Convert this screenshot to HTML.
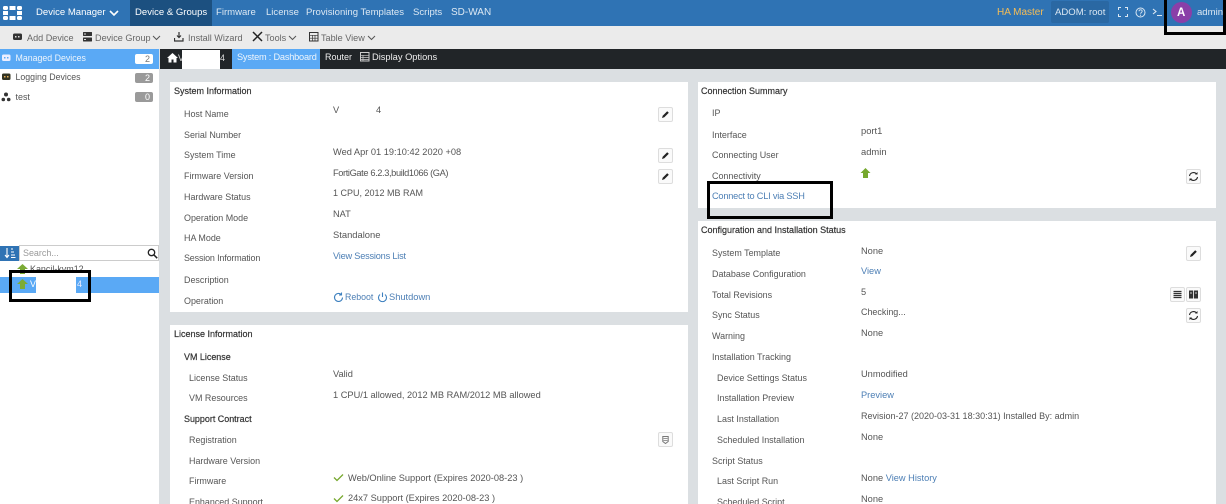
<!DOCTYPE html>
<html><head><meta charset="utf-8"><style>
html,body{margin:0;padding:0;width:1226px;height:504px;overflow:hidden;background:#fff}
#r{position:relative;width:1226px;height:504px;overflow:hidden;font:8.95px/12px "Liberation Sans",sans-serif;color:#555;filter:blur(.35px)}
.b{position:absolute}
.t{position:absolute;white-space:nowrap;margin-top:-.6px}
.a{margin-top:.4px}
.v{font-size:9.25px}
.n{color:#dce8f3;font-size:9.55px;font-weight:400}
.h{color:#333;font-size:9px;font-weight:400;-webkit-text-stroke:.2px #333}
.s{color:#333;-webkit-text-stroke:.2px #333}
.l{color:#4d7fb5}
.tb{color:#666;font-size:9.1px}
.ic{position:absolute;width:13px;height:13px;background:#fafafa;border:1px solid #ddd;border-radius:2px}
.ic svg,.x{position:absolute;left:0;top:0}
.bd{position:absolute;height:10px;width:18px;border-radius:2px;background:#9a9a9a;color:#fff;font-size:9px;line-height:10px;text-align:right;box-sizing:border-box;padding-right:3px}
.f{position:absolute;border:3px solid #000;box-sizing:border-box}
</style></head><body><div id="r">
<!-- top bar -->
<div class="b" style="left:0;top:0;width:1226px;height:26px;background:#2f73b4"></div>
<div class="b" style="left:130px;top:0;width:82px;height:26px;background:#1c5080"></div>
<svg class="x" style="left:3px;top:5px" width="20" height="16" viewBox="0 0 20 16"><g fill="#fff"><rect x="0" y="1" width="5" height="4" rx="1.500"/><rect x="6.500" y="1" width="6" height="4"/><rect x="14" y="1" width="5" height="4" rx="1.500"/><rect x="0" y="6" width="5" height="4"/><rect x="14" y="6" width="5" height="4"/><rect x="0" y="11" width="5" height="4" rx="1.500"/><rect x="6.500" y="11" width="6" height="4"/><rect x="14" y="11" width="5" height="4" rx="1.500"/></g></svg>
<div class="t n" style="left:36px;top:7.500px;color:#fff">Device Manager</div>
<svg class="x" style="left:109px;top:10px" width="10" height="7"><path d="M1 1l4 4 4-4" fill="none" stroke="#fff" stroke-width="1.600"/></svg>
<div class="t n" style="left:135px;top:7.500px;color:#fff">Device &amp; Groups</div>
<div class="t n" style="left:216px;top:7.500px">Firmware</div>
<div class="t n" style="left:266px;top:7.500px">License</div>
<div class="t n" style="left:306px;top:7.500px">Provisioning Templates</div>
<div class="t n" style="left:413px;top:7.500px">Scripts</div>
<div class="t n" style="left:451px;top:7.500px;font-size:10px">SD-WAN</div>
<div class="t" style="left:997px;top:7.500px;color:#f5bd57;font-size:10px">HA Master</div>
<div class="b" style="left:1051px;top:1px;width:58px;height:22px;background:#2a68a3;border-radius:2px"></div>
<div class="t n" style="left:1055px;top:7.500px">ADOM: root</div>
<svg class="x" style="left:1118px;top:7px" width="10" height="10"><path d="M0.500 3V.5H3M7 .5H9.500V3M9.500 7V9.500H7M3 9.500H.5V7" fill="none" stroke="#dce8f3"/></svg>
<svg class="x" style="left:1135px;top:7px" width="11" height="11"><circle cx="5.500" cy="5.500" r="4.500" fill="none" stroke="#dce8f3"/><path d="M4 4.300c0-2 3.200-2 3.200 0 0 1.200-1.600 1.200-1.600 2.400" fill="none" stroke="#dce8f3" stroke-width=".9"/><circle cx="5.500" cy="8.200" r=".6" fill="#dce8f3"/></svg>
<svg class="x" style="left:1152px;top:8px" width="11" height="9"><path d="M1 1l3 2.500-3 2.500M5 7.500h5" fill="none" stroke="#dce8f3" stroke-width="1.100"/></svg>
<div class="b" style="left:1171px;top:2px;width:21px;height:21px;border-radius:50%;background:#8a3fa8"></div>
<div class="t" style="left:1177px;top:8px;color:#fff;font-size:11.500px;font-weight:700">A</div>
<div class="t n" style="left:1197px;top:7.500px">admin</div>
<!-- toolbar -->
<div class="b" style="left:0;top:26px;width:1226px;height:23px;background:#ebebeb"></div>
<svg class="x" style="left:13px;top:33px" width="10" height="8"><rect x="0" y="0.500" width="9" height="6.500" rx="1.500" fill="#333"/><rect x="2" y="3" width="1.500" height="1.500" fill="#ddd"/><rect x="5" y="3" width="1.500" height="1.500" fill="#ddd"/></svg>
<div class="t tb" style="left:27px;top:32.500px">Add Device</div>
<svg class="x" style="left:83px;top:32px" width="10" height="10"><g fill="#333"><rect x="0" y="0" width="9" height="4" rx=".5"/><rect x="0" y="5.500" width="9" height="4" rx=".5"/></g><rect x="1" y="1.500" width="2" height="1" fill="#ddd"/><rect x="1" y="7" width="2" height="1" fill="#ddd"/></svg>
<div class="t tb" style="left:95px;top:32.500px">Device Group</div>
<svg class="x" style="left:152px;top:35px" width="9" height="6"><path d="M1 1l3.500 3.500L8 1" fill="none" stroke="#555"/></svg>
<svg class="x" style="left:174px;top:32px" width="10" height="10"><path d="M5 0v5M3 3.500l2 2 2-2M.5 6v3h8.500V6" fill="none" stroke="#333" stroke-width="1.200"/></svg>
<div class="t tb" style="left:188px;top:32.500px">Install Wizard</div>
<svg class="x" style="left:252px;top:31px" width="11" height="11"><path d="M1 1l9 9M10 1L1 10" fill="none" stroke="#222" stroke-width="1.500"/></svg>
<div class="t tb" style="left:265px;top:32.500px">Tools</div>
<svg class="x" style="left:288px;top:35px" width="9" height="6"><path d="M1 1l3.500 3.500L8 1" fill="none" stroke="#555"/></svg>
<svg class="x" style="left:309px;top:32px" width="10" height="10"><rect x=".5" y=".5" width="8.500" height="8.500" fill="none" stroke="#333"/><path d="M1 3.300h8M1 6.200h8M3.500 3v6M6 3v6" stroke="#333" stroke-width=".7"/></svg>
<div class="t tb" style="left:321px;top:32.500px">Table View</div>
<svg class="x" style="left:367px;top:35px" width="9" height="6"><path d="M1 1l3.500 3.500L8 1" fill="none" stroke="#555"/></svg>
<!-- sidebar -->
<div class="b" style="left:159px;top:49px;width:1067px;height:455px;background:#dbdfe2"></div>
<div class="b" style="left:0;top:49px;width:159px;height:20px;background:#5aa9f5"></div>
<svg class="x" style="left:2px;top:54px" width="10" height="9"><rect x="0" y=".5" width="8.500" height="6.500" rx="1.500" fill="#eef"/><rect x="2" y="3" width="1.500" height="1.500" fill="#5aa9f5"/><rect x="5" y="3" width="1.500" height="1.500" fill="#5aa9f5"/></svg>
<div class="t" style="left:15.500px;top:53px;color:#eef5fc;font-size:8.800px">Managed Devices</div>
<div class="bd" style="left:135px;top:54px;background:#fff;color:#777">2</div>
<svg class="x" style="left:2px;top:73px" width="10" height="9"><rect x="0" y=".5" width="8.500" height="6.500" rx="1.500" fill="#332"/><rect x="2" y="3" width="1.500" height="1.500" fill="#e8b25a"/><rect x="5" y="3" width="1.500" height="1.500" fill="#e8b25a"/></svg>
<div class="t" style="left:15.500px;top:72px;font-size:8.800px">Logging Devices</div>
<div class="bd" style="left:135px;top:73px">2</div>
<svg class="x" style="left:1px;top:92px" width="11" height="10"><circle cx="5" cy="2.500" r="2" fill="#333"/><circle cx="2.300" cy="7.500" r="1.800" fill="#333"/><circle cx="7.700" cy="7.500" r="1.800" fill="#333"/></svg>
<div class="t" style="left:15.500px;top:91.500px">test</div>
<div class="bd" style="left:135px;top:92px">0</div>
<!-- search -->
<div class="b" style="left:0;top:246px;width:19px;height:15px;background:#2f73b4"></div>
<svg class="x" style="left:4px;top:248px" width="12" height="11"><path d="M3 0v9M1 7l2 2.500L5 7M7 1h2M7 4h3M7 7h4M7 9.500h4.500" fill="none" stroke="#fff" stroke-width="1.100"/></svg>
<div class="b" style="left:19px;top:245px;width:140px;height:16px;border:1px solid #ccc;box-sizing:border-box;background:#fff"></div>
<div class="t a" style="left:23px;top:247px;color:#999">Search...</div>
<svg class="x" style="left:147px;top:248px" width="11" height="11"><circle cx="4.500" cy="4.500" r="3.200" fill="none" stroke="#222" stroke-width="1.300"/><path d="M7 7l3.200 3.200" stroke="#222" stroke-width="1.500"/></svg>
<svg class="x" style="left:17px;top:264px" width="12" height="10"><path d="M5.500 0L11 5H8v5H3V5H0z" fill="#7cab35"/></svg>
<div class="t" style="left:30px;top:263.500px">Kancil-kvm12</div>
<div class="b" style="left:0;top:277px;width:159px;height:16px;background:#5aa9f5"></div>
<svg class="x" style="left:17px;top:279px" width="11" height="10"><path d="M5.500 0L11 5H8v5H3V5H0z" fill="#7cab35"/></svg>
<div class="t" style="left:30px;top:279px;color:#fff">V</div>
<div class="b" style="left:36px;top:277px;width:40px;height:16px;background:#fff"></div>
<div class="t" style="left:77px;top:279px;color:#eef">4</div>
<div class="f" style="left:9px;top:270px;width:82px;height:32px"></div>
<!-- breadcrumb -->
<div class="b" style="left:160px;top:49px;width:1066px;height:20px;background:#212528"></div>
<div class="b" style="left:232px;top:49px;width:88px;height:20px;background:#5aa9f5"></div>
<svg class="x" style="left:167px;top:53px" width="11" height="10"><path d="M5.500 0L11 5H9.500v4.500H6.500V6.500h-2v3H1.500V5H0z" fill="#fff"/></svg>
<div class="t" style="left:178px;top:52.500px;color:#ddd">V</div>
<div class="b" style="left:182px;top:50px;width:38px;height:19px;background:#fff"></div>
<div class="t" style="left:220px;top:52.500px;color:#ddd">4</div>
<div class="t" style="left:237px;top:51.500px;color:#eef5fc;font-size:9.200px;letter-spacing:-.2px">System : Dashboard</div>
<div class="t" style="left:325px;top:51.500px;color:#eee;font-size:9px">Router</div>
<svg class="x" style="left:360px;top:52px" width="10" height="10"><rect x=".5" y=".5" width="8.500" height="8.500" fill="none" stroke="#ccc"/><path d="M1 3.300h8M1 5.500h8M1 7.500h8M3 3v6" stroke="#ccc" stroke-width=".7"/></svg>
<div class="t" style="left:372px;top:51.500px;color:#eee;font-size:9.300px">Display Options</div>
<!-- panels -->
<div class="b" style="left:170px;top:82px;width:518px;height:230px;background:#fff"></div>
<div class="b" style="left:170px;top:325px;width:518px;height:179px;background:#fff"></div>
<div class="b" style="left:698px;top:82px;width:518px;height:126px;background:#fff"></div>
<div class="b" style="left:698px;top:221px;width:518px;height:283px;background:#fff"></div>
<!-- System Information -->
<div class="t h a" style="left:174px;top:85px">System Information</div>
<div class="t a" style="left:184px;top:108px">Host Name</div><div class="t v" style="left:333px;top:105px">V</div><div class="t v" style="left:376px;top:105px">4</div>
<div class="t a" style="left:184px;top:128.500px">Serial Number</div>
<div class="t" style="left:184px;top:149.500px">System Time</div><div class="t v" style="left:333px;top:147px">Wed Apr 01 19:10:42 2020 +08</div>
<div class="t a" style="left:184px;top:170px">Firmware Version</div><div class="t v" style="left:333px;top:168px;letter-spacing:-.38px">FortiGate 6.2.3,build1066 (GA)</div>
<div class="t a" style="left:184px;top:191px">Hardware Status</div><div class="t v" style="left:333px;top:188px;font-size:9px">1 CPU, 2012 MB RAM</div>
<div class="t a" style="left:184px;top:211.500px">Operation Mode</div><div class="t v" style="left:333px;top:209px">NAT</div>
<div class="t a" style="left:184px;top:232px">HA Mode</div><div class="t v" style="left:333px;top:230px;font-size:9.400px">Standalone</div>
<div class="t" style="left:184px;top:253px;letter-spacing:-.15px">Session Information</div><div class="t l" style="left:333px;top:250.500px;font-size:9.200px;letter-spacing:-.2px">View Sessions List</div>
<div class="t a" style="left:184px;top:274px">Description</div>
<div class="t a" style="left:184px;top:294.500px">Operation</div>
<svg class="x" style="left:333px;top:292px" width="11" height="11"><path d="M9.500 5.500a4 4 0 1 1-1.300-3M8.500 .5v2.500H6" fill="none" stroke="#3d80bf" stroke-width="1.100"/></svg>
<div class="t l" style="left:345px;top:291.500px;font-size:8.800px">Reboot</div>
<svg class="x" style="left:377px;top:292px" width="11" height="11"><path d="M3 2.500a4 4 0 1 0 5 0M5.500 .5V5" fill="none" stroke="#3d80bf" stroke-width="1.100"/></svg>
<div class="t l" style="left:389px;top:291.500px;font-size:9.300px">Shutdown</div>
<!-- pencil icons -->
<div class="ic" style="left:658px;top:107px"><svg width="13" height="13"><path d="M3 10l.7-2.300 4.500-4.500 1.600 1.600-4.500 4.500z" fill="#222"/></svg></div>
<div class="ic" style="left:658px;top:148px"><svg width="13" height="13"><path d="M3 10l.7-2.300 4.500-4.500 1.600 1.600-4.500 4.500z" fill="#222"/></svg></div>
<div class="ic" style="left:658px;top:169px"><svg width="13" height="13"><path d="M3 10l.7-2.300 4.500-4.500 1.600 1.600-4.500 4.500z" fill="#222"/></svg></div>
<!-- License -->
<div class="t h a" style="left:174px;top:328px">License Information</div>
<div class="t s a" style="left:184px;top:350.500px">VM License</div>
<div class="t a" style="left:189px;top:371.500px">License Status</div><div class="t v" style="left:333px;top:369px">Valid</div>
<div class="t a" style="left:189px;top:392px">VM Resources</div><div class="t v" style="left:333px;top:389.500px">1 CPU/1 allowed, 2012 MB RAM/2012 MB allowed</div>
<div class="t s a" style="left:184px;top:413px">Support Contract</div>
<div class="t a" style="left:189px;top:433.500px">Registration</div>
<div class="ic" style="left:658px;top:432px"><svg width="13" height="13"><path d="M3.800 3.500h5.400v5l-2.700 2-2.700-2z" fill="none" stroke="#777"/><path d="M4.500 5.500h4M4.500 7.500h4" stroke="#777" stroke-width=".7"/></svg></div>
<div class="t a" style="left:189px;top:454.500px">Hardware Version</div>
<div class="t a" style="left:189px;top:475px">Firmware</div>
<svg class="x" style="left:333px;top:473px" width="11" height="9"><path d="M1 4.500l3 3 6-6" fill="none" stroke="#76a82e" stroke-width="1.300"/></svg>
<div class="t v" style="left:348px;top:472.500px">Web/Online Support (Expires 2020-08-23 )</div>
<div class="t a" style="left:189px;top:496px">Enhanced Support</div>
<svg class="x" style="left:333px;top:494px" width="11" height="9"><path d="M1 4.500l3 3 6-6" fill="none" stroke="#76a82e" stroke-width="1.300"/></svg>
<div class="t v" style="left:348px;top:493px">24x7 Support (Expires 2020-08-23 )</div>
<!-- Connection Summary -->
<div class="t h a" style="left:701px;top:85px">Connection Summary</div>
<div class="t" style="left:712px;top:107.500px">IP</div>
<div class="t a" style="left:712px;top:128.500px">Interface</div><div class="t v" style="left:861px;top:126px;font-size:9.400px">port1</div>
<div class="t a" style="left:712px;top:149px">Connecting User</div><div class="t v" style="left:861px;top:147px;font-size:9.400px">admin</div>
<div class="t a" style="left:712px;top:170px">Connectivity</div>
<svg class="x" style="left:860px;top:168px" width="11" height="10"><path d="M5.500 0L10.500 5H8v5H3V5H.5z" fill="#76a82e"/></svg>
<div class="t l" style="left:712px;top:191px;font-size:9.200px;letter-spacing:-.2px">Connect to CLI via SSH</div>
<div class="f" style="left:707px;top:181px;width:126px;height:38px"></div>
<div class="ic" style="left:1186px;top:169px"><svg width="13" height="13"><path d="M2.500 6a4 4 0 0 1 7-2M10.500 7a4 4 0 0 1-7 2" fill="none" stroke="#222" stroke-width="1.100"/><path d="M8 4.500h2.500V2M5 8.500H2.500V11" fill="#222"/></svg></div>
<!-- Config -->
<div class="t h a" style="left:701px;top:224px">Configuration and Installation Status</div>
<div class="t a" style="left:712px;top:247px">System Template</div><div class="t v a" style="left:861px;top:244.500px">None</div>
<div class="ic" style="left:1186px;top:246px"><svg width="13" height="13"><path d="M3 10l.7-2.300 4.500-4.500 1.600 1.600-4.500 4.500z" fill="#222"/></svg></div>
<div class="t a" style="left:712px;top:268px">Database Configuration</div><div class="t l v a" style="left:861px;top:265px">View</div>
<div class="t a" style="left:712px;top:288.500px">Total Revisions</div><div class="t v a" style="left:861px;top:286px">5</div>
<div class="ic" style="left:1170px;top:287px"><svg width="13" height="13"><path d="M2.500 3.500h8M2.500 5.500h8M2.500 7.500h8M2.500 9.500h8" stroke="#333" stroke-width="1.200"/></svg></div>
<div class="ic" style="left:1186px;top:287px"><svg width="13" height="13"><rect x="2" y="2.500" width="9" height="8" fill="#333"/><path d="M6.500 2.500v8M3 5h2M8 5h2" stroke="#fff" stroke-width=".8"/></svg></div>
<div class="t a" style="left:712px;top:309px">Sync Status</div><div class="t" style="left:861px;top:307px">Checking...</div>
<div class="ic" style="left:1186px;top:308px"><svg width="13" height="13"><path d="M2.500 6a4 4 0 0 1 7-2M10.500 7a4 4 0 0 1-7 2" fill="none" stroke="#222" stroke-width="1.100"/><path d="M8 4.500h2.500V2M5 8.500H2.500V11" fill="#222"/></svg></div>
<div class="t a" style="left:712px;top:330px">Warning</div><div class="t v" style="left:861px;top:327.500px">None</div>
<div class="t a" style="left:712px;top:350.500px">Installation Tracking</div>
<div class="t a" style="left:717px;top:371.500px">Device Settings Status</div><div class="t v" style="left:861px;top:369px">Unmodified</div>
<div class="t a" style="left:717px;top:392px">Installation Preview</div><div class="t l v" style="left:861px;top:389.500px">Preview</div>
<div class="t a" style="left:717px;top:413px">Last Installation</div><div class="t a" style="left:861px;top:410px;font-size:9px">Revision-27 (2020-03-31 18:30:31) Installed By: admin</div>
<div class="t a" style="left:717px;top:433.500px">Scheduled Installation</div><div class="t v a" style="left:861px;top:431px">None</div>
<div class="t a" style="left:712px;top:454.500px">Script Status</div>
<div class="t a" style="left:717px;top:475px">Last Script Run</div><div class="t v" style="left:861px;top:472.500px">None <span class="l">View History</span></div>
<div class="t a" style="left:717px;top:496px">Scheduled Script</div><div class="t v a" style="left:861px;top:493px">None</div>
<!-- admin box -->
<div class="f" style="left:1164px;top:-3px;width:62px;height:38px"></div>
</div></body></html>
